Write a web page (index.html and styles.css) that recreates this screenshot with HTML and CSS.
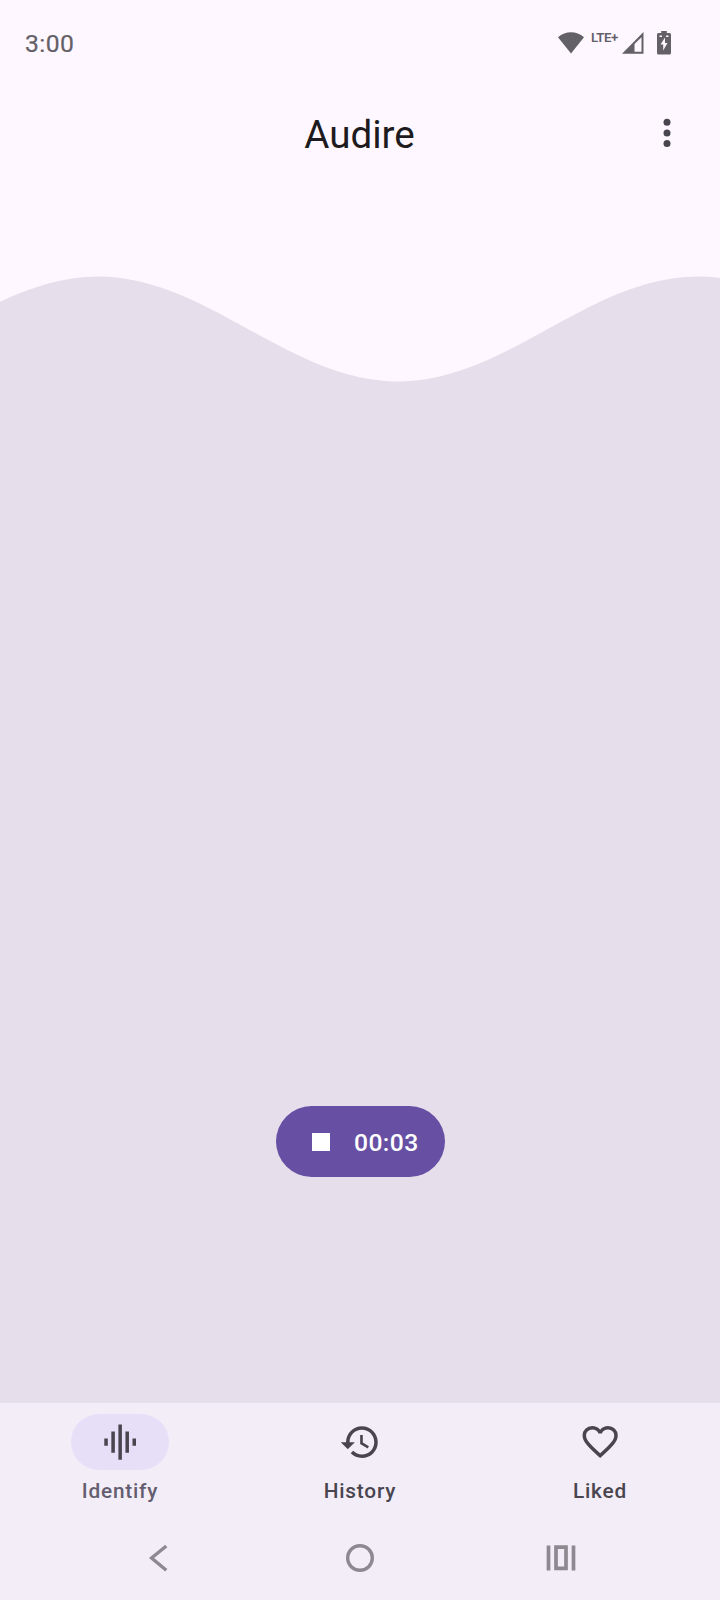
FILE: index.html
```html
<!DOCTYPE html>
<html lang="en">
<head>
<meta charset="utf-8">
<title>Audire</title>
<link rel="stylesheet" href="styles.css">
</head>
<body>
<div class="screen">
  <header class="status">
    <span class="clock">3:00</span>
    <div class="indicators">
      <svg class="wifi" width="26" height="22" viewBox="0 0 26 22"><path d="M0 5.2C7.5-1.5 18.500-1.500 26 5.200L13 21.500Z"/></svg>
      <span class="network">LTE+</span>
      <svg class="signal" width="22" height="22" viewBox="0 0 22 22"><path fill-rule="evenodd" d="M0 21.700L21.500 0V21.700ZM12.500 12V19.700H19.500V5.200Z"/></svg>
      <svg class="battery" width="14" height="24" viewBox="0 0 14 24"><path fill-rule="evenodd" d="M4.200 0H9.800V2H12.500Q14 2 14 3.500V22Q14 23.500 12.500 23.500H1.500Q0 23.500 0 22V3.500Q0 2 1.500 2H4.200ZM2.500 4.500V6H5V4.500ZM9 4.500V6H11.500V4.500ZM8 6.500L3.500 13.500H6.200V19.500L10.500 12H8Z"/></svg>
    </div>
  </header>
  <div class="appbar">
    <h1 class="title">Audire</h1>
    <svg class="more" width="8" height="30" viewBox="0 0 8 30"><circle cx="4" cy="4.300" r="3.500"/><circle cx="4" cy="14.900" r="3.500"/><circle cx="4" cy="25.500" r="3.500"/></svg>
  </div>
  <main class="recorder">
    <svg class="wave" width="720" height="110" viewBox="0 275 720 110"><path d="M-202 381.500C-92.700 381.500-11.300 276.500 98 276.500S288.700 381.500 398 381.500S588.700 276.500 698 276.500S888.700 381.500 998 381.500V386H-202Z"/></svg>
    <div class="fill">
      <button class="stop"><span class="square"></span><span class="time">00:03</span></button>
    </div>
  </main>
  <nav class="tabs">
    <a class="tab selected">
      <span class="indicator"><svg class="icon" viewBox="0 0 24 24"><path d="M7 18h2V6H7v12zm4 4h2V2h-2v20zm-8-8h2v-4H3v4zm12 4h2V6h-2v12zm4-8v4h2v-4h-2z"/></svg></span>
      <span class="label">Identify</span>
    </a>
    <a class="tab">
      <span class="indicator"><svg class="icon" viewBox="0 0 24 24"><path d="M13 3c-4.970 0-9 4.030-9 9H1l3.890 3.890.07.14L9 12H6c0-3.870 3.130-7 7-7s7 3.130 7 7-3.130 7-7 7c-1.930 0-3.680-.79-4.940-2.060l-1.420 1.420C8.270 19.990 10.510 21 13 21c4.970 0 9-4.030 9-9s-4.030-9-9-9zm-1 5v5l4.280 2.540.72-1.210-3.500-2.080V8H12z"/></svg></span>
      <span class="label">History</span>
    </a>
    <a class="tab">
      <span class="indicator"><svg class="icon" viewBox="0 0 24 24"><path fill-rule="evenodd" d="M12 21L10.550 19.700Q8.025 17.425 6.375 15.775T3.750 12.812Q2.775 11.500 2.388 10.400T2 8.150Q2 5.900 3.575 4.400T7.500 2.900Q8.800 2.900 9.975 3.400T12 4.900Q12.850 3.900 14.025 3.400T16.500 2.900Q18.850 2.900 20.425 4.400T22 8.150Q22 9.300 21.613 10.400T20.250 12.812Q19.275 14.125 17.625 15.775T13.450 19.700ZM12 18.300Q14.400 16.150 15.950 14.613T18.400 11.938Q19.300 10.800 19.650 9.913T20 8.150Q20 6.750 19 5.800T16.500 4.850Q15.325 4.850 14.325 5.450T12.950 7.050H11.050Q10.675 6.050 9.675 5.450T7.500 4.850Q6 4.850 5 5.800T4 8.150Q4 9.025 4.350 9.913T5.600 11.938Q6.500 13.075 8.050 14.613T12 18.300Z"/></svg></span>
      <span class="label">Liked</span>
    </a>
  </nav>
  <footer class="system">
    <svg width="30" height="30" viewBox="0 0 30 30"><path d="M22.300 3L7.600 15L22.300 27.200" fill="none" stroke="#8d8990" stroke-width="3.400"/></svg>
    <svg width="30" height="30" viewBox="0 0 30 30"><circle cx="15" cy="15" r="12.300" fill="none" stroke="#8d8990" stroke-width="3.400"/></svg>
    <svg width="30" height="30" viewBox="0 0 30 30"><path d="M2.500 2.500V27.500M27.500 2.500V27.500M10 4.200H20V25.300H10Z" fill="none" stroke="#8d8990" stroke-width="3.700"/></svg>
  </footer>
</div>
</body>
</html>
```

FILE: styles.css
```css
* { box-sizing: border-box; }
body { margin: 0; font-family: Roboto, sans-serif; background: #fef7ff; }
svg { display: block; flex: none; }
.screen { width: 720px; height: 1600px; display: flex; flex-direction: column; overflow: hidden; }
.status { height: 84px; padding: 2px 49px 0 25px; display: flex; align-items: center; justify-content: space-between; color: #646068; }
.clock { font-size: 24.700px; line-height: 30px; padding-top: 1px; letter-spacing: .4px; -webkit-text-stroke: .2px #646068; }
.indicators { display: flex; height: 24px; align-items: flex-start; fill: #646068; }
.wifi { margin-top: 1px; }
.network { width: 28px; margin-left: 7px; font-size: 13.200px; line-height: 13px; font-weight: 600; letter-spacing: -.4px; white-space: nowrap; }
.signal { margin: 1px 0 0 3px; }
.battery { margin-left: 13px; }
.appbar { height: 99px; padding: 0 49px; display: grid; grid-template-columns: 8px 1fr 8px; align-items: center; }
.title { grid-column: 2; margin: 0; padding: 2px 1px 0 0; text-align: center; font-size: 38.600px; line-height: 46px; font-weight: 400; color: #1d1b20; }
.more { fill: #49454f; margin-bottom: 2px; }
.recorder { flex: 1; padding-top: 92px; display: flex; flex-direction: column; }
.wave { fill: #e6dfeb; }
.fill { flex: 1; background: #e6dfeb; display: flex; justify-content: center; align-items: flex-end; padding: 0 0 226px 1px; }
.stop { width: 169px; height: 71px; padding: 0 0 0 36px; border: 0; border-radius: 36px; background: #6750a4; color: #fff; display: flex; align-items: center; gap: 24px; font-family: inherit; }
.square { width: 18px; height: 18px; background: #fff; }
.time { font-size: 24.700px; font-weight: 500; line-height: 30px; padding-top: 2px; letter-spacing: .4px; }
.tabs { height: 117px; padding-top: 11px; display: grid; grid-template-columns: repeat(3, 1fr); background: #f3edf7; }
.tab { display: flex; flex-direction: column; align-items: center; color: #49454f; }
.indicator { width: 98px; height: 56px; border-radius: 28px; display: flex; align-items: center; justify-content: center; }
.selected .indicator { background: #e7dff8; }
.icon { width: 42.300px; height: 42.300px; fill: #49454f; }
.label { margin-top: 8px; font-size: 20.800px; line-height: 26px; font-weight: 500; letter-spacing: .8px; }
.selected .label { color: #645d70; }
.system { height: 80px; padding: 0 144px; display: flex; justify-content: space-between; background: #f3edf7; padding-top: 23px; }
```
